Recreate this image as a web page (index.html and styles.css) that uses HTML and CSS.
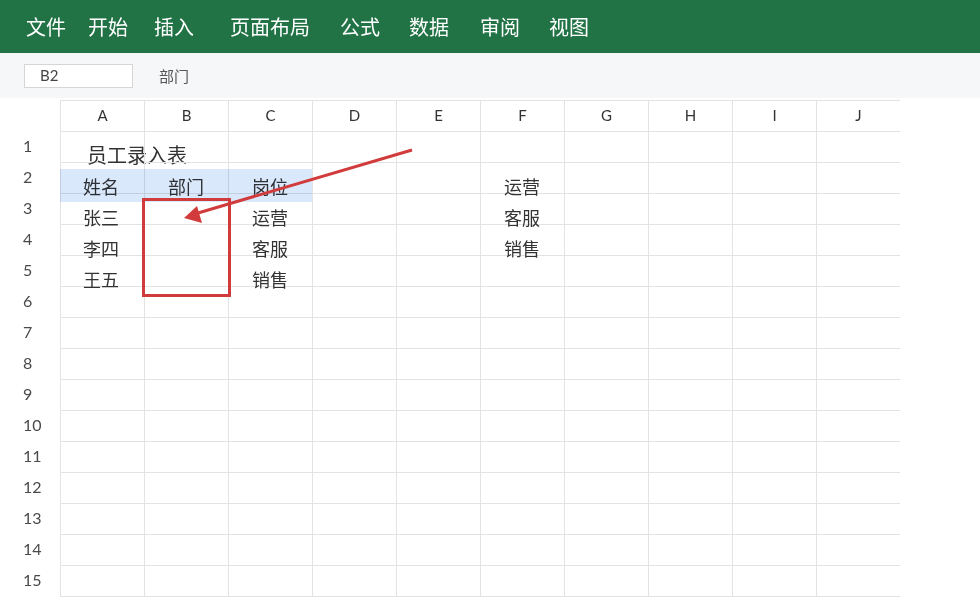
FILE: index.html
```html
<!DOCTYPE html>
<html lang="zh-CN">
<head>
<meta charset="utf-8">
<title>员工录入表</title>
<link rel="stylesheet" href="styles.css">
</head>
<body>
<header class="ribbon">
  <span class="menu">文件</span>
  <span class="menu">开始</span>
  <span class="menu">插入</span>
  <span class="menu">页面布局</span>
  <span class="menu">公式</span>
  <span class="menu">数据</span>
  <span class="menu">审阅</span>
  <span class="menu">视图</span>
</header>
<div class="toolbar">
  <div class="namebox">B2</div>
  <div class="formula">部门</div>
</div>
<main class="sheet">
  <div class="band"></div>
  <div class="row head">
    <div class="rn"></div>
    <div class="c">A</div><div class="c">B</div><div class="c">C</div><div class="c">D</div><div class="c">E</div>
    <div class="c">F</div><div class="c">G</div><div class="c">H</div><div class="c">I</div><div class="c">J</div>
  </div>
  <div class="row">
    <div class="rn">1</div>
    <div class="c title">员工录入表</div><div class="c"></div><div class="c"></div><div class="c"></div><div class="c"></div>
    <div class="c"></div><div class="c"></div><div class="c"></div><div class="c"></div><div class="c"></div>
  </div>
  <div class="row">
    <div class="rn">2</div>
    <div class="c t tA">姓名</div><div class="c t">部门</div><div class="c t">岗位</div><div class="c"></div><div class="c"></div>
    <div class="c t">运营</div><div class="c"></div><div class="c"></div><div class="c"></div><div class="c"></div>
  </div>
  <div class="row">
    <div class="rn">3</div>
    <div class="c t tA">张三</div><div class="c"></div><div class="c t">运营</div><div class="c"></div><div class="c"></div>
    <div class="c t">客服</div><div class="c"></div><div class="c"></div><div class="c"></div><div class="c"></div>
  </div>
  <div class="row">
    <div class="rn">4</div>
    <div class="c t tA">李四</div><div class="c"></div><div class="c t">客服</div><div class="c"></div><div class="c"></div>
    <div class="c t">销售</div><div class="c"></div><div class="c"></div><div class="c"></div><div class="c"></div>
  </div>
  <div class="row">
    <div class="rn">5</div>
    <div class="c t tA">王五</div><div class="c"></div><div class="c t">销售</div><div class="c"></div><div class="c"></div>
    <div class="c"></div><div class="c"></div><div class="c"></div><div class="c"></div><div class="c"></div>
  </div>
  <div class="row"><div class="rn">6</div><div class="c"></div><div class="c"></div><div class="c"></div><div class="c"></div><div class="c"></div><div class="c"></div><div class="c"></div><div class="c"></div><div class="c"></div><div class="c"></div></div>
  <div class="row"><div class="rn">7</div><div class="c"></div><div class="c"></div><div class="c"></div><div class="c"></div><div class="c"></div><div class="c"></div><div class="c"></div><div class="c"></div><div class="c"></div><div class="c"></div></div>
  <div class="row"><div class="rn">8</div><div class="c"></div><div class="c"></div><div class="c"></div><div class="c"></div><div class="c"></div><div class="c"></div><div class="c"></div><div class="c"></div><div class="c"></div><div class="c"></div></div>
  <div class="row"><div class="rn">9</div><div class="c"></div><div class="c"></div><div class="c"></div><div class="c"></div><div class="c"></div><div class="c"></div><div class="c"></div><div class="c"></div><div class="c"></div><div class="c"></div></div>
  <div class="row"><div class="rn">10</div><div class="c"></div><div class="c"></div><div class="c"></div><div class="c"></div><div class="c"></div><div class="c"></div><div class="c"></div><div class="c"></div><div class="c"></div><div class="c"></div></div>
  <div class="row"><div class="rn">11</div><div class="c"></div><div class="c"></div><div class="c"></div><div class="c"></div><div class="c"></div><div class="c"></div><div class="c"></div><div class="c"></div><div class="c"></div><div class="c"></div></div>
  <div class="row"><div class="rn">12</div><div class="c"></div><div class="c"></div><div class="c"></div><div class="c"></div><div class="c"></div><div class="c"></div><div class="c"></div><div class="c"></div><div class="c"></div><div class="c"></div></div>
  <div class="row"><div class="rn">13</div><div class="c"></div><div class="c"></div><div class="c"></div><div class="c"></div><div class="c"></div><div class="c"></div><div class="c"></div><div class="c"></div><div class="c"></div><div class="c"></div></div>
  <div class="row"><div class="rn">14</div><div class="c"></div><div class="c"></div><div class="c"></div><div class="c"></div><div class="c"></div><div class="c"></div><div class="c"></div><div class="c"></div><div class="c"></div><div class="c"></div></div>
  <div class="row"><div class="rn">15</div><div class="c"></div><div class="c"></div><div class="c"></div><div class="c"></div><div class="c"></div><div class="c"></div><div class="c"></div><div class="c"></div><div class="c"></div><div class="c"></div></div>
</main>
<svg class="annot" width="980" height="610" viewBox="0 0 980 610" aria-hidden="true">
  <rect x="143.5" y="199.5" width="86" height="96" fill="none" stroke="#d23b3b" stroke-width="3"/>
  <line x1="412" y1="150" x2="198" y2="213" stroke="#d23b3b" stroke-width="3"/>
  <polygon points="184,218 197,206 202,223" fill="#d23b3b"/>
</svg>
</body>
</html>
```

FILE: styles.css
```css
html, body {
  margin: 0;
  padding: 0;
  background: #ffffff;
}
body {
  width: 980px;
  height: 610px;
  overflow: hidden;
  position: relative;
  font-family: "Lato", "Noto Sans CJK SC", sans-serif;
  color: #333333;
}
.ribbon {
  height: 53px;
  background: #217346;
  display: flex;
  align-items: center;
  padding-left: 26px;
}
.menu {
  color: #ffffff;
  font-size: 20px;
  line-height: 55px;
  font-family: "Noto Sans CJK SC", sans-serif;
}
.menu:nth-child(2) { margin-left: 22px; }
.menu:nth-child(3) { margin-left: 26px; }
.menu:nth-child(4) { margin-left: 36px; }
.menu:nth-child(5) { margin-left: 30px; }
.menu:nth-child(6) { margin-left: 29px; }
.menu:nth-child(7) { margin-left: 31px; }
.menu:nth-child(8) { margin-left: 29px; }

.toolbar {
  height: 45px;
  background: #f5f7f9;
  display: flex;
  align-items: center;
  padding-left: 24px;
  margin-bottom: 2px;
  box-sizing: border-box;
}
.namebox {
  width: 109px;
  height: 24px;
  box-sizing: border-box;
  border: 1px solid #d6d6d6;
  background: #ffffff;
  font-size: 15px;
  line-height: 21px;
  padding-left: 15px;
  color: #444444;
}
.formula {
  margin-left: 26px;
  font-size: 15px;
  color: #555555;
  font-family: "Noto Sans CJK SC", sans-serif;
}

.sheet {
  position: relative;
  width: 900px;
}
.band {
  position: absolute;
  left: 60px;
  top: 69px;
  width: 252px;
  height: 33px;
  background: #dae8fb;
  mix-blend-mode: multiply;
  z-index: 2;
}
.row {
  display: flex;
  height: 31px;
}
.row.head {
  height: 32px;
}
.rn {
  width: 60px;
  flex: none;
  box-sizing: border-box;
  padding-left: 23px;
  font-size: 16px;
  line-height: 27px;
  color: #4a4a4a;
}
.c {
  width: 84px;
  flex: none;
  box-sizing: border-box;
  border-left: 1px solid #e3e3e3;
  border-bottom: 1px solid #e3e3e3;
  white-space: nowrap;
  overflow: visible;
}
.head .c {
  border-top: 1px solid #e3e3e3;
  text-align: center;
  font-size: 15px;
  line-height: 28px;
  color: #333333;
}
.t {
  font-family: "Noto Sans CJK SC", sans-serif;
  font-size: 18px;
  line-height: 18px;
  padding-top: 14px;
  padding-left: 23px;
  color: #333333;
}
.t.tA {
  padding-left: 22px;
}
.title {
  font-family: "Noto Sans CJK SC", sans-serif;
  font-size: 20px;
  line-height: 20px;
  padding-top: 13px;
  padding-left: 26px;
  color: #333333;
}
.annot {
  position: absolute;
  left: 0;
  top: 0;
  pointer-events: none;
  z-index: 5;
}
```
